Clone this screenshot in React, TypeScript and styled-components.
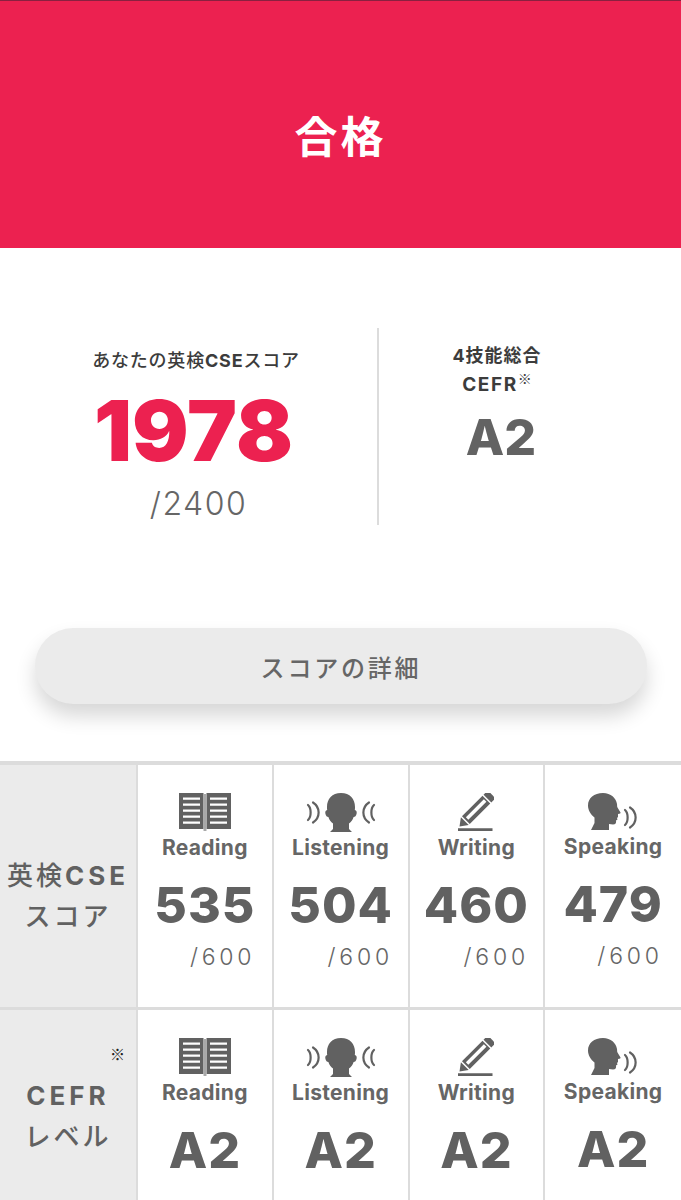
import React from 'react'
import styled, { createGlobalStyle } from 'styled-components'

const GlobalStyle = createGlobalStyle`
    html, body {
        margin: 0;
        padding: 0;
        background: #fff;
    }
    body {
        font-family: Inter, "Noto Sans CJK JP", sans-serif;
        color: #616161;
    }
`

const Page = styled.div`
    width: 681px;
    height: 1200px;
    overflow: hidden;
    background: #fff;
`
const Banner = styled.header`
    height: 247px;
    border-top: 1px solid #8a2040;
    background: #ec2150;
    color: #fff;
    display: flex;
    align-items: center;
    justify-content: center;
    h1 {
        margin: 26px 0 0;
        font-size: 43px;
        line-height: 1;
        font-weight: 700;
        letter-spacing: 3px;
    }
`
const Summary = styled.section`
    display: flex;
    padding-top: 80px;
    height: 197px;
`
const ScoreCol = styled.div`
    width: 379px;
    flex: none;
    padding-left: 15px;
    box-sizing: border-box;
    display: flex;
    flex-direction: column;
    align-items: center;
    border-right: 2px solid #dcdcdc;
`
const CaptionLine = styled.div`
    font-size: 18px;
    line-height: 29px;
    font-weight: 700;
    letter-spacing: 1px;
    color: #3c3c3c;
    white-space: nowrap;
`
const ScoreCaption = styled(CaptionLine)`
    margin-top: 18px;
    font-weight: 500;
    letter-spacing: 0.8px;
    b { font-weight: 700; }
`
const CefrLabel = styled(CaptionLine)`
    font-size: 19px;
    letter-spacing: 1.6px;
`
const BigScore = styled.div`
    margin: 12px 5px 0 0;
    font-size: 84px;
    line-height: 88px;
    font-weight: 900;
    color: #ec2150;
`
const ScoreMax = styled.div`
    margin: 11px 0 0 5px;
    font-size: 32px;
    line-height: 36px;
    font-weight: 300;
    letter-spacing: 1.5px;
    color: #666;
`
const CefrCol = styled.div`
    flex: 1;
    display: flex;
    flex-direction: column;
    align-items: center;
    padding: 13px 66px 0 0;
    sup {
        font-family: "Noto Sans CJK JP", sans-serif;
        font-size: 14px;
        font-weight: 500;
        line-height: 0;
        letter-spacing: 0;
        vertical-align: 7px;
    }
`
const CefrValue = styled.div`
    margin: 8px 0 0 8px;
    font-size: 50px;
    line-height: 60px;
    font-weight: 800;
    color: #636363;
`
const ButtonWrap = styled.div`
    padding: 103px 34px 0 35px;
`
const DetailButton = styled.button`
    display: block;
    width: 100%;
    height: 76px;
    border: none;
    border-radius: 38px;
    background: #ebebeb;
    box-shadow: 0 12px 20px rgba(0, 0, 0, 0.16);
    font-family: inherit;
    font-size: 24px;
    font-weight: 500;
    letter-spacing: 2.8px;
    color: #666;
`
const Table = styled.section`
    margin-top: 57px;
    display: grid;
    grid-template-columns: 138px repeat(4, 1fr);
    border-top: 4px solid #dcdcdc;
`
const Row = styled.div`
    display: contents;
`
const HeadCell = styled.div<{ $top: number }>`
    height: 245px;
    box-sizing: border-box;
    padding-top: ${(p) => p.$top}px;
    position: relative;
    background: #ebebeb;
    border-right: 2px solid #dcdcdc;
    border-bottom: 3px solid #dcdcdc;
    display: flex;
    flex-direction: column;
    align-items: center;
    font-size: 26px;
    line-height: 41px;
    font-weight: 500;
    letter-spacing: 3px;
    color: #616161;
    white-space: nowrap;
    b { font-weight: 700; letter-spacing: 4px; }
`
const Note = styled.span`
    position: absolute;
    top: 36px;
    right: 11px;
    font-family: "Noto Sans CJK JP", sans-serif;
    font-size: 15px;
    font-weight: 400;
    line-height: 1;
    letter-spacing: 0;
    color: #222;
`
const Cell = styled.div`
    height: 245px;
    box-sizing: border-box;
    padding-top: 28px;
    border-right: 2px solid #dcdcdc;
    border-bottom: 3px solid #dcdcdc;
    display: flex;
    flex-direction: column;
    align-items: center;
    &:last-child { border-right: none; }
`
const IconBox = styled.div<{ $h: number }>`
    height: ${(p) => p.$h}px;
    display: flex;
    justify-content: center;
    svg { display: block; fill: #616161; }
`
const SkillName = styled.div`
    margin-top: 4px;
    font-size: 21px;
    line-height: 24px;
    font-weight: 700;
    letter-spacing: 0.3px;
    color: #666;
`
const ValueBlock = styled.div`
    margin-top: 16px;
    display: inline-flex;
    flex-direction: column;
    align-items: flex-end;
`
const Value = styled.div`
    font-size: 50px;
    line-height: 58px;
    font-weight: 800;
    letter-spacing: 1px;
    color: #616161;
`
const Max = styled.div`
    margin-top: 9px;
    font-size: 23px;
    line-height: 28px;
    font-weight: 300;
    letter-spacing: 3.8px;
    color: #666;
`

const Waves = ({ x, y = 0, flip }: { x: number; y?: number; flip?: boolean }) => (
    <g transform={`translate(${x} ${y}) scale(${flip ? -1 : 1} 1)`} fill="none" stroke="#616161" strokeWidth="2.2" strokeLinecap="round">
        <path d="M0 12c3.500 3 3.500 12 0 15" />
        <path d="M5 9.500c7.500 5 7.500 15 0 20" />
    </g>
)

const BookIcon = () => (
    <svg width="52" height="38" viewBox="0 0 52 38">
        <path d="M0 0h24.500v36H0zM27.500 0H52v36H27.500z" />
        <path d="M24.500 1h3v37h-3z" style={{ fill: '#a8a8a8' }} />
        <path d="M4 4.500h17v2.200H4zM4 10.500h17v2.200H4zM4 16.500h17v2.200H4zM4 22.500h17v2.200H4zM4 28.500h17v2.200H4zM31 4.500h17v2.200H31zM31 10.500h17v2.200H31zM31 16.500h17v2.200H31zM31 22.500h17v2.200H31zM31 28.500h17v2.200H31z" style={{ fill: '#fff' }} />
    </svg>
)

const ListenIcon = () => (
    <svg width="70" height="39" viewBox="0 0 70 39">
        <Waves x={2} />
        <Waves x={68} flip />
        <path d="M35 0c9 0 14 6 14 14 0 1 0 2-.2 3 1.700.3 2.200 2 1.800 3.700-.4 2-1.500 3.300-3 3.300-.8 3-2.500 5-4.600 6.500V36l3 3H24l3-3v-5.500c-2.100-1.500-3.800-3.500-4.600-6.500-1.500 0-2.600-1.300-3-3.300-.4-1.700.1-3.400 1.800-3.700-.2-1-.2-2-.2-3C21 6 26 0 35 0z" />
    </svg>
)

const WriteIcon = () => (
    <svg width="36" height="38" viewBox="0 0 36 38">
        <path d="M0 35.300h34.500V38H0z" />
        <g transform="translate(1.500 33.500) rotate(-45)">
            <path d="M0 0l7.500-5.500v11z" />
            <path d="M9 -5.500h29v11H9z" />
            <path d="M11 -2h25.500v3.500H11z" style={{ fill: '#fff' }} />
            <path d="M39.500 -5.500h6v11h-6z" />
        </g>
    </svg>
)

const SpeakIcon = () => (
    <svg width="50" height="37" viewBox="0 0 50 37">
        <path d="M15 0c8 0 13 5 14 11 .2 1.500 0 2.500.5 3.500l3 5c.3.800-.5 1.300-2.500 1.500v3l-1 1 .5 1.500-1.500 1c.5 2.500-.5 4-3 4l-4-.5V37H3l3.500-7V24.500C2.500 21.500 0 17 0 12.500 0 5 6 0 15 0z" />
        <Waves x={37} y={5} />
    </svg>
)

const skills = [
    { name: 'Reading', icon: <BookIcon />, iconH: 39, score: '535', level: 'A2' },
    { name: 'Listening', icon: <ListenIcon />, iconH: 39, score: '504', level: 'A2' },
    { name: 'Writing', icon: <WriteIcon />, iconH: 39, score: '460', level: 'A2' },
    { name: 'Speaking', icon: <SpeakIcon />, iconH: 38, score: '479', level: 'A2' },
]

export default function App() {
    return (
        <Page>
            <GlobalStyle />
            <Banner><h1>合格</h1></Banner>
            <Summary>
                <ScoreCol>
                    <ScoreCaption>あなたの英検<b>CSE</b>スコア</ScoreCaption>
                    <BigScore>1978</BigScore>
                    <ScoreMax>/2400</ScoreMax>
                </ScoreCol>
                <CefrCol>
                    <CaptionLine>4技能総合</CaptionLine>
                    <CefrLabel>CEFR<sup>※</sup></CefrLabel>
                    <CefrValue>A2</CefrValue>
                </CefrCol>
            </Summary>
            <ButtonWrap>
                <DetailButton>スコアの詳細</DetailButton>
            </ButtonWrap>
            <Table>
                <Row>
                    <HeadCell $top={90}>
                        <div>英検<b>CSE</b></div>
                        <div>スコア</div>
                    </HeadCell>
                    {skills.map((s) => (
                        <Cell key={s.name}>
                            <IconBox $h={s.iconH}>{s.icon}</IconBox>
                            <SkillName>{s.name}</SkillName>
                            <ValueBlock>
                                <Value>{s.score}</Value>
                                <Max>/600</Max>
                            </ValueBlock>
                        </Cell>
                    ))}
                </Row>
                <Row>
                    <HeadCell $top={65}>
                        <Note>※</Note>
                        <div><b>CEFR</b></div>
                        <div>レベル</div>
                    </HeadCell>
                    {skills.map((s) => (
                        <Cell key={s.name}>
                            <IconBox $h={s.iconH}>{s.icon}</IconBox>
                            <SkillName>{s.name}</SkillName>
                            <ValueBlock>
                                <Value>{s.level}</Value>
                            </ValueBlock>
                        </Cell>
                    ))}
                </Row>
            </Table>
        </Page>
    )
}
